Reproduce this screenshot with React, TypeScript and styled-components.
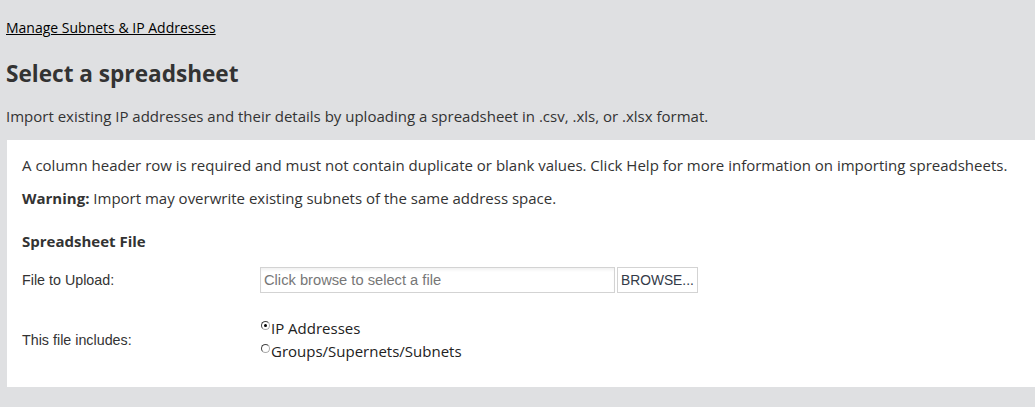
import React, { useState } from "react";
import styled, { createGlobalStyle } from "styled-components";

const GlobalStyle = createGlobalStyle`
    html, body {
        margin: 0;
        padding: 0;
        background: #dfe0e2;
    }
    body {
        font-family: "Open Sans", "Liberation Sans", sans-serif;
        color: #333;
    }
`;

export default () => {
    const [includes, setIncludes] = useState("ip");

    return (
        <Page>
            <GlobalStyle />
            <Breadcrumb href="#">Manage Subnets &amp; IP Addresses</Breadcrumb>
            <Title>Select a spreadsheet</Title>
            <Intro>
                Import existing IP addresses and their details by uploading a
                spreadsheet in .csv, .xls, or .xlsx format.
            </Intro>
            <Panel>
                <Note>
                    A column header row is required and must not contain
                    duplicate or blank values. Click Help for more information
                    on importing spreadsheets.
                </Note>
                <Note>
                    <b>Warning:</b> Import may overwrite existing subnets of
                    the same address space.
                </Note>
                <SectionTitle>Spreadsheet File</SectionTitle>
                <FormRow $top={16}>
                    <Label>File to Upload:</Label>
                    <FileField>
                        <FileInput
                            readOnly
                            placeholder="Click browse to select a file"
                        />
                        <BrowseButton type="button">BROWSE...</BrowseButton>
                    </FileField>
                </FormRow>
                <FormRow $top={25}>
                    <Label>This file includes:</Label>
                    <Options>
                        <Option>
                            <Radio
                                type="radio"
                                name="includes"
                                checked={includes === "ip"}
                                onChange={() => setIncludes("ip")}
                            />
                            IP Addresses
                        </Option>
                        <Option>
                            <Radio
                                type="radio"
                                name="includes"
                                checked={includes === "groups"}
                                onChange={() => setIncludes("groups")}
                            />
                            Groups/Supernets/Subnets
                        </Option>
                    </Options>
                </FormRow>
            </Panel>
        </Page>
    );
};

const Page = styled.div`
    padding: 16px 0 20px 6px;
    min-height: 407px;
    box-sizing: border-box;
`;

const Breadcrumb = styled.a`
    display: inline-block;
    font-size: 14px;
    line-height: 19px;
    color: #000;
    text-decoration: underline;
`;

const Title = styled.h1`
    margin: 21px 0 0;
    font-size: 22.6px;
    line-height: 30px;
    font-weight: 700;
    color: #333;
`;

const Intro = styled.p`
    margin: 17px 0 0;
    font-size: 15px;
    line-height: 20px;
`;

const Panel = styled.div`
    margin: 14px 0 0 1px;
    background: #fff;
    padding: 15px 15px 18px;
    height: 247px;
    box-sizing: border-box;
`;

const Note = styled.p`
    margin: 0 0 13px;
    font-size: 15px;
    line-height: 20px;
    b {
        font-weight: 700;
    }
`;

const SectionTitle = styled.h3`
    margin: 23px 0 0;
    font-size: 15px;
    line-height: 20px;
    font-weight: 700;
`;

const FormRow = styled.div<{ $top?: number }>`
    display: flex;
    align-items: center;
    margin-top: ${(p) => p.$top ?? 12}px;
`;

const Label = styled.span`
    width: 238px;
    font-family: "Liberation Sans", Arial, sans-serif;
    font-size: 14.3px;
    color: #333;
`;

const FileField = styled.div`
    display: flex;
    gap: 2px;
`;

const FileInput = styled.input`
    width: 355px;
    height: 26px;
    box-sizing: border-box;
    border: 1px solid #d3d3d3;
    padding: 0 4px 0 3px;
    font-family: "Liberation Sans", Arial, sans-serif;
    font-size: 14.7px;
    outline: none;
    box-shadow: inset 0 3px 3px -1px rgba(0, 0, 0, 0.06);
    &::placeholder {
        color: #777;
    }
`;

const BrowseButton = styled.button`
    height: 26px;
    box-sizing: border-box;
    border: 1px solid #d3d3d3;
    background: #fff;
    padding: 0 3px;
    font-family: "Liberation Sans", Arial, sans-serif;
    font-size: 13.8px;
    color: #333a48;
`;

const Options = styled.div`
    display: flex;
    flex-direction: column;
    gap: 3px;
`;

const Option = styled.label`
    display: flex;
    align-items: center;
    font-size: 15px;
    line-height: 20px;
    color: #222;
`;

const Radio = styled.input`
    appearance: none;
    width: 9px;
    height: 9px;
    margin: -5px 1px 0 1px;
    border: 1px solid #aaa;
    border-top-color: #444;
    border-left-color: #444;
    border-radius: 50%;
    background: #fff;
    box-sizing: border-box;
    position: relative;
    &:checked::after {
        content: "";
        position: absolute;
        left: 2px;
        top: 2px;
        width: 3px;
        height: 3px;
        border-radius: 50%;
        background: #000;
    }
`;
